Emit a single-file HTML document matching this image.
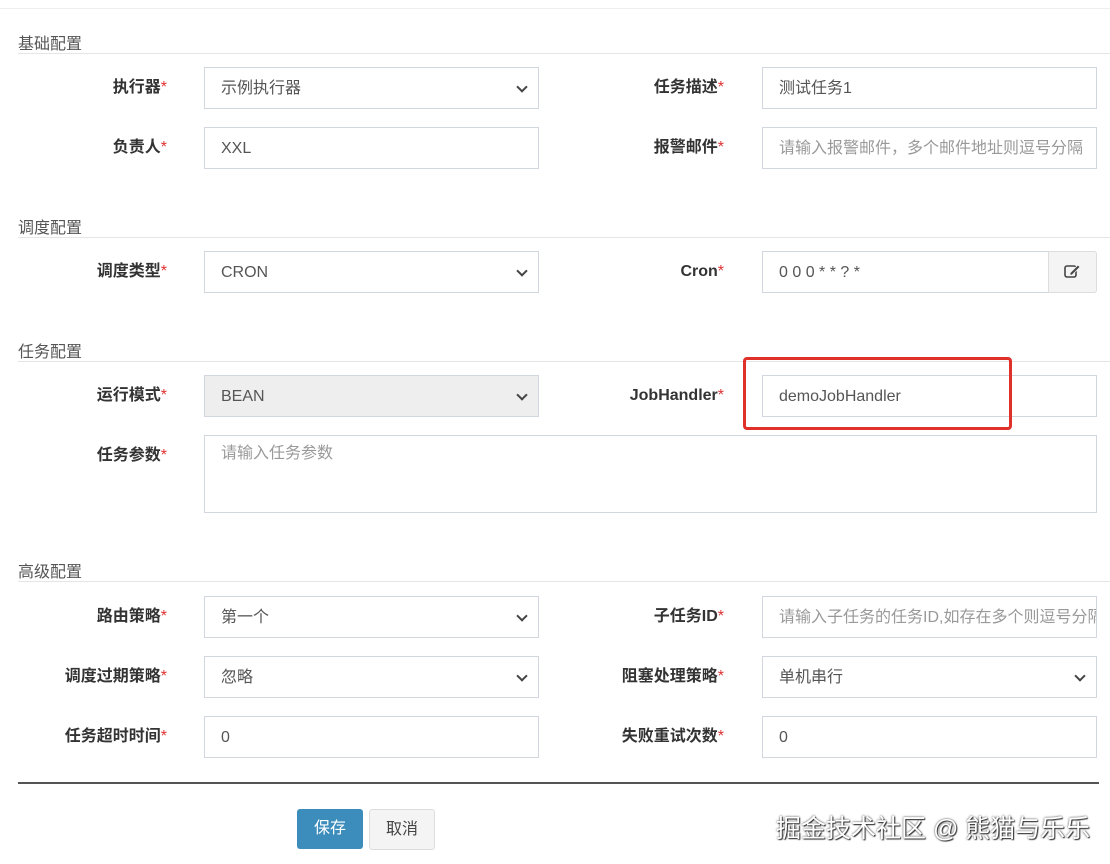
<!DOCTYPE html>
<html><head><meta charset="utf-8"><style>
body{margin:0;width:1110px;height:864px;background:#fff;font-family:"Liberation Sans","Noto Sans CJK SC",sans-serif;position:relative;overflow:hidden;color:#333}
.a{position:absolute}
.hd{position:absolute;left:18px;font-size:16px;color:#555;}
.hl{position:absolute;left:18px;right:0;height:1px;background:#e5e5e5}
.lb{position:absolute;font-size:16px;font-weight:bold;color:#333;text-align:right;width:200px;line-height:42px}
.lb i{color:#d33;font-style:normal;font-weight:normal}
.in{position:absolute;height:40px;border:1px solid #d2d6de;background:#fff;font-size:16px;line-height:41px;padding-left:16px;box-sizing:content-box;color:#555;white-space:nowrap;overflow:hidden}
.ph{color:#999}
.sel::after{content:"";position:absolute;right:12px;top:15px;width:6px;height:6px;border-right:2px solid #444;border-bottom:2px solid #444;transform:rotate(45deg)}
</style></head><body>
<div class="a" style="left:0;right:0;top:8px;height:1px;background:#eee"></div>

<div class="hd" style="top:30px">基础配置</div><div class="hl" style="top:53px"></div>
<div class="lb" style="left:-33px;top:67px">执行器<i>*</i></div>
<div class="in sel" style="left:204px;top:67px;width:317px">示例执行器</div>
<div class="lb" style="left:524px;top:67px">任务描述<i>*</i></div>
<div class="in" style="left:762px;top:67px;width:317px">测试任务1</div>
<div class="lb" style="left:-33px;top:127px">负责人<i>*</i></div>
<div class="in" style="left:204px;top:127px;width:317px">XXL</div>
<div class="lb" style="left:524px;top:127px">报警邮件<i>*</i></div>
<div class="in ph" style="left:762px;top:127px;width:317px">请输入报警邮件，多个邮件地址则逗号分隔</div>

<div class="hd" style="top:214px">调度配置</div><div class="hl" style="top:237px"></div>
<div class="lb" style="left:-33px;top:251px">调度类型<i>*</i></div>
<div class="in sel" style="left:204px;top:251px;width:317px">CRON</div>
<div class="lb" style="left:524px;top:251px">Cron<i>*</i></div>
<div class="in" style="left:762px;top:251px;width:269px">0 0 0 * * ? *</div>
<div class="a" style="left:1048px;top:251px;width:47px;height:40px;border:1px solid #ddd;background:#f4f4f4;border-radius:0 3px 3px 0">
<svg width="47" height="40" viewBox="0 0 47 40"><rect x="16" y="14" width="11" height="11" rx="2" fill="none" stroke="#444" stroke-width="1.6"/><path d="M21 21l8-8 2 2-8 8h-2z" fill="#444" stroke="#f4f4f4" stroke-width="0.8"/></svg></div>

<div class="hd" style="top:338px">任务配置</div><div class="hl" style="top:361px"></div>
<div class="lb" style="left:-33px;top:375px">运行模式<i>*</i></div>
<div class="in sel" style="left:204px;top:375px;width:317px;background:#eee">BEAN</div>
<div class="lb" style="left:524px;top:375px">JobHandler<i>*</i></div>
<div class="in" style="left:762px;top:375px;width:317px">demoJobHandler</div>
<div class="a" style="left:743px;top:357px;width:263px;height:67px;border:3px solid #e0302a;border-radius:4px"></div>
<div class="lb" style="left:-33px;top:435px;line-height:42px">任务参数<i>*</i></div>
<div class="in ph" style="left:204px;top:435px;width:875px;height:76px;line-height:36px">请输入任务参数</div>

<div class="hd" style="top:558px">高级配置</div><div class="hl" style="top:581px"></div>
<div class="lb" style="left:-33px;top:596px">路由策略<i>*</i></div>
<div class="in sel" style="left:204px;top:596px;width:317px">第一个</div>
<div class="lb" style="left:524px;top:596px">子任务ID<i>*</i></div>
<div class="in ph" style="left:762px;top:596px;width:317px">请输入子任务的任务ID,如存在多个则逗号分隔</div>
<div class="lb" style="left:-33px;top:656px">调度过期策略<i>*</i></div>
<div class="in sel" style="left:204px;top:656px;width:317px">忽略</div>
<div class="lb" style="left:524px;top:656px">阻塞处理策略<i>*</i></div>
<div class="in sel" style="left:762px;top:656px;width:317px">单机串行</div>
<div class="lb" style="left:-33px;top:716px">任务超时时间<i>*</i></div>
<div class="in" style="left:204px;top:716px;width:317px">0</div>
<div class="lb" style="left:524px;top:716px">失败重试次数<i>*</i></div>
<div class="in" style="left:762px;top:716px;width:317px">0</div>

<div class="a" style="left:18px;top:782px;width:1081px;height:2px;background:#555"></div>
<div class="a" style="left:297px;top:809px;width:66px;height:40px;background:#3c8dbc;color:#fff;border-radius:3px;font-size:16px;line-height:40px;text-align:center">保存</div>
<div class="a" style="left:369px;top:809px;width:64px;height:39px;background:#f4f4f4;border:1px solid #ddd;border-radius:3px;font-size:16px;line-height:39px;text-align:center;color:#444">取消</div>
<div class="a" style="left:776px;top:809px;font-size:25px;color:#fff;text-shadow:0 0 2px #333,1px 1px 1px #333">掘金技术社区 @ 熊猫与乐乐</div>
</body></html>
